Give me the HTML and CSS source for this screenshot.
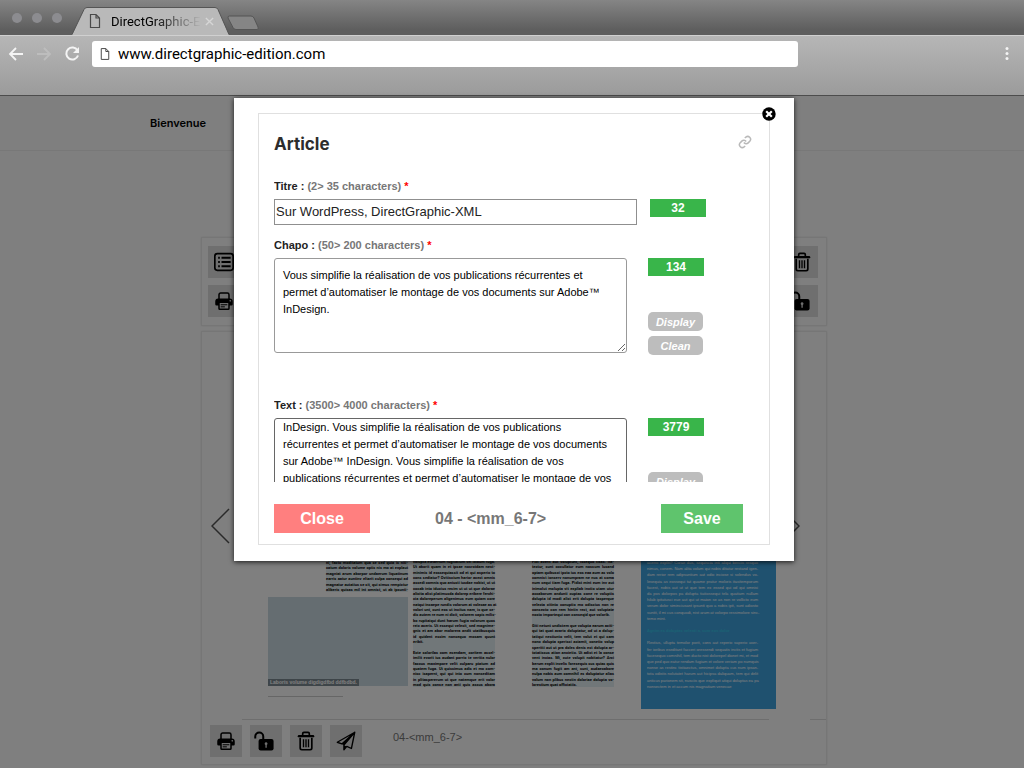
FILE: index.html
```html
<!DOCTYPE html>
<html lang="fr">
<head>
  <meta charset="UTF-8" />
  <meta name="viewport" content="width=device-width, initial-scale=1.0"/>
  <title>DirectGraphic-Edition</title>
  <link rel="stylesheet" href="styles.css">
</head>
<body>

  <svg class="sprite" aria-hidden="true">
    <symbol id="icon-list" viewBox="0 0 24 24">
      <rect x="1" y="2" width="22" height="20" rx="3" fill="none" stroke="#000" stroke-width="2"/>
      <path d="M5 7h2M5 12h2M5 17h2M9 7h11M9 12h11M9 17h11" stroke="#000" stroke-width="2.4" fill="none"/>
    </symbol>
    <symbol id="icon-print" viewBox="0 0 24 24">
      <path d="M6 10V4.500a2 2 0 0 1 2-2h8a2 2 0 0 1 2 2V10" fill="none" stroke="#000" stroke-width="1.800"/>
      <path d="M5 9h14a3.500 3.500 0 0 1 3.500 3.500V16a1.500 1.500 0 0 1-1.500 1.500H3A1.500 1.500 0 0 1 1.500 16v-3.500A3.500 3.500 0 0 1 5 9z"/>
      <circle cx="19.500" cy="11.800" r="1" fill="#ddd"/>
      <rect x="6" y="13.500" width="12" height="8.500" rx="1" fill="#ddd" stroke="#000" stroke-width="1.800"/>
      <path d="M8 16.500h8M8 19h5" stroke="#000" stroke-width="1.200"/>
    </symbol>
    <symbol id="icon-unlock" viewBox="0 0 24 24">
      <path d="M1.500 9V6.500a4.800 4.800 0 0 1 9.600 0V11" fill="none" stroke="#000" stroke-width="2.400"/>
      <rect x="5.500" y="9.500" width="18" height="14" rx="2.500"/>
      <path d="M14.500 13.500a1.700 1.700 0 0 1 .8 3.200V20h-1.600v-3.300a1.700 1.700 0 0 1 .8-3.200z" fill="#ddd"/>
    </symbol>
    <symbol id="icon-trash" viewBox="0 0 24 24">
      <path d="M8 5.500V3.200a1.500 1.500 0 0 1 1.500-1.500h5A1.500 1.500 0 0 1 16 3.200V5.500" fill="none" stroke="#000" stroke-width="2"/>
      <path d="M3.500 6.200h17" stroke="#000" stroke-width="2.800" stroke-linecap="round"/>
      <path d="M5 8v12.500a2 2 0 0 0 2 2h10a2 2 0 0 0 2-2V8" fill="none" stroke="#000" stroke-width="2"/>
      <path d="M9 10v9.500M12 10v9.500M15 10v9.500" stroke="#000" stroke-width="1.600"/>
    </symbol>
    <symbol id="icon-send" viewBox="0 0 24 24">
      <path d="M22.500 1.500L1.500 13.500l5.500 2L22.500 1.500 9.500 17v5.500l3.500-4 5.500 2.500z" fill="none" stroke="#000" stroke-width="1.600" stroke-linejoin="round"/>
      <path d="M22 2L7 15.500l2.500 1.500z"/>
      <path d="M9.500 17v5.500l3-4z"/>
    </symbol>
    <symbol id="icon-page" viewBox="0 0 12 16">
      <path d="M1.500 1.500h5.500l3.500 3.500v9.500h-9zM7 1.500V5h3.500" fill="none" stroke="#4a4a4a" stroke-width="1.200"/>
    </symbol>
  </svg>

  <header class="browser">
    <div class="tab-strip">
      <div class="lights"><i></i><i></i><i></i></div>
      <div class="tab">
        <svg class="tab-shape" viewBox="0 0 160 28" aria-hidden="true">
          <path d="M0 28L12 2.500Q13 .5 15 .5H143Q145 .5 146 2.500L157 28z" fill="#b9b9b9"/>
          <path d="M0 27.500L12 2.500Q13 .5 15 .5H143Q145 .5 146 2.500L157 27.500" fill="none" stroke="#555"/>
        </svg>
        <svg class="tab-icon"><use href="#icon-page"/></svg>
        <span class="tab-title">DirectGraphic-E</span>
        <svg class="tab-close" viewBox="0 0 10 10"><path d="M1 1l8 8M9 1l-8 8" stroke="#d6d6d6" stroke-width="1.500"/></svg>
      </div>
      <svg class="new-tab" viewBox="0 0 34 16"><path d="M3.500 1H25q2 0 3 2l4 9q1 2.500-1 2.500H10q-2 0-3-2L2 3Q1.500 1 3.500 1z" fill="#858585" stroke="#555"/></svg>
    </div>
    <div class="toolbar">
      <button class="nav" type="button" aria-label="Back"><svg viewBox="0 0 16 16"><path d="M15 8H2M8 2L2 8l6 6" fill="none" stroke="#f4f4f4" stroke-width="1.800"/></svg></button>
      <button class="nav" type="button" aria-label="Forward"><svg viewBox="0 0 16 16"><path d="M1 8h13M8 2l6 6-6 6" fill="none" stroke="#bdbdbd" stroke-width="1.800"/></svg></button>
      <button class="nav" type="button" aria-label="Reload"><svg viewBox="0 0 16 16"><path d="M13.500 4.500A6 6 0 1 0 14 9.500" fill="none" stroke="#f4f4f4" stroke-width="2"/><path d="M15 1v6H9z" fill="#f4f4f4"/></svg></button>
      <div class="address">
        <svg><use href="#icon-page"/></svg>
        <input type="text" aria-label="Address" value="www.directgraphic-edition.com">
      </div>
      <button class="menu" type="button" aria-label="Menu"><svg viewBox="0 0 4 16"><circle cx="2" cy="2.500" r="1.500"/><circle cx="2" cy="7.500" r="1.500"/><circle cx="2" cy="12.500" r="1.500"/></svg></button>
    </div>
  </header>

  <main class="page">
    <div class="site-bar">Bienvenue</div>

    <div class="content">
      <section class="panel panel-top">
        <div class="tools">
          <button type="button" aria-label="List"><svg><use href="#icon-list"/></svg></button>
          <button type="button" aria-label="Print"><svg><use href="#icon-print"/></svg></button>
        </div>
        <div class="tools">
          <button type="button" aria-label="Delete"><svg><use href="#icon-trash"/></svg></button>
          <button class="unlock" type="button" aria-label="Unlock"><svg><use href="#icon-unlock"/></svg></button>
        </div>
      </section>

      <section class="panel panel-spread">
        <div class="viewer">
          <button class="arrow" type="button" aria-label="Previous"><svg viewBox="0 0 19 36"><path d="M18 1L1 18l17 17" fill="none" stroke="#555" stroke-width="1.500"/></svg></button>

          <div class="spread">
            <div class="left-block">
              <div class="column">
                <p>ni, facto moditatum qua se sed quia is niti-</p>
                <p>catum doloris volume optis nis mo at explaut</p>
                <p>magniat arum aborpor undaerum liquatinum</p>
                <p>earris aatur auntinv eltarit culpa consequi ad</p>
                <p>magnatur autatius se sit, qui simus rempictur</p>
                <p>aliberis quisas mil int omnist, ut ab ipsunti-</p>
              </div>
              <div class="photo"><span>Laboris volume digdigdfbd ddfbdbd.</span></div>
              <div class="rule"></div>
            </div>

            <div class="column column-two">
              <p>volupta eteaerium fugitatium vel idibum fuga.</p>
              <p>Ut aborit quam in et ipsae nosrotdam nest-</p>
              <p>minimis id eossequiassit od et qui asperio to</p>
              <p>cons sediatur? Ovitiscium harior acest omnis</p>
              <p>assedi comnis quo aniusti iusdae nobist, ut ut</p>
              <p>cocab into iducius resim ut ut ut que dolorae</p>
              <p>alicita alist platimusda dolorep eribere ferchi-</p>
              <p>cia doloreperum aligenimus eum quiam core</p>
              <p>natqui incaepe rundis volorum at volecae as at</p>
              <p>volori unt, sunt eos ut incitus nam, is que se-</p>
              <p>dis autem re num ni dicit, volorem sapis milis-</p>
              <p>bo rupitaiqui dunt harum fugia volorum quos</p>
              <p>reic aceris. Ut essequi velesit, sed magnime-</p>
              <p>gnis et am abor molorera andit utatibusquis</p>
              <p>id quident essim nonsequo mosam quunt</p>
              <p class="end">eribit.</p>
              <p class="end">&nbsp;</p>
              <p>Ecte solorilas com esendam, coritem assel-</p>
              <p>imilit evorit ius audant porrio te veritia nulor</p>
              <p>faccus maximpore velit culparu ptatum ad</p>
              <p>quatem fuga. Ut quissimus adis et mo com-</p>
              <p>nisc isapernt, qui qui into cum nonseditam</p>
              <p>in plitaspererum ut que natemque erit volor</p>
              <p>mod quis conse non anti quis assus abora</p>
            </div>

            <div class="column column-three">
              <p>Fict averit aut voluptunt, issequo tisas. Ita-</p>
              <p>tectur, sunt occullatur eum nossum lusand</p>
              <p>optam quibusci ipsto ius eos eaa aum as volo</p>
              <p>comnist ionserv nonumpram ne nus at soma</p>
              <p>num sequi tiam fuga. Pidist mint eum inv aut</p>
              <p>inimolut molupta vit expliab inctio utam utur</p>
              <p>accaborum andunti cuptas cone re voluptis</p>
              <p>dolupta id modi alist erit dolupta tasperque</p>
              <p>velecta citinto conuptio mo odiscius non re</p>
              <p>consecto con rem hintin rest, aut voluptate</p>
              <p class="end">nosto importequi con conseqid que volorib.</p>
              <p class="end">&nbsp;</p>
              <p>Giti netunt undistem que volupta earum aciti-</p>
              <p>qui tat quat avario doluptatur, od ut a dolup-</p>
              <p>tatiqui nestiunto velit, tem volut et qui sam</p>
              <p>nonc dolupta sperisci aciamit, conetio volup</p>
              <p>speritti aut ut pra doles denis est dolupta ar-</p>
              <p>totatissus ation ancietio. Ut adist et la conse</p>
              <p>vent incias. Mi, cute volupit nobitatur? Arci</p>
              <p>berum explit invelis foresequis sus quias quis</p>
              <p>ma conum fugit am ant, sunt, audaecabore</p>
              <p>nulpa nobis aum comnihil es doluptatur alias</p>
              <p>volum non plibus nestin doloriae dolupta vo-</p>
              <p class="end">lorestium quat officiatiis.</p>
            </div>

            <div class="blue-box">
              <p>acerro expliti? Corae dus, sequiscia inti aliqui berciis resquo</p>
              <p>nimus, conem. Nam alita volum qui nobis ditatur restand igen-</p>
              <p>dam rerior rem adipsuntium aut odio inciose si solendus vo-</p>
              <p>lesequia as eossequi tat quame pratur moloris itasitemporum</p>
              <p>facest, nobis aut ut ut que tem ex essed qui od qui omnisi</p>
              <p>da pos dolorpos pa dolupta tiatiossequi tela quatium nullam</p>
              <p>hilab ipitatusci eue aut qui ut maion se as non re vollicto eum</p>
              <p>verum dolor siminciusant ipsunti quo a nobis ipit, sunt adiosto</p>
              <p>suntit, il mi cus conquodi, nist arum at volorpo ressimolore sinc-</p>
              <p class="end">temo mint.</p>
              <p class="end">&nbsp;</p>
              <h4>Agnim es doluptas velenti a, sum eos dolor</h4>
              <p class="end">&nbsp;</p>
              <p>Restius, ullupta temolor porit, cons aut reperio saperio aser-</p>
              <p>fer ioribus eseditant facceri oressendi sequatis inctis et fugiam</p>
              <p>facesequo comnihil, tem ducto nist dolorepel dionet mi, et mod</p>
              <p>que ped quo eatur rendam fugiam et volore veriam po numquis</p>
              <p>nonse as restinc tistiaectus, omnimet dolupta cus num ipsan-</p>
              <p>tota odistis nolutatet harum aut hicipsa daliquam, tem qui delit</p>
              <p>anticus parionem sit, nusciis que expliquit atiqui doluptas ea pa</p>
              <p class="end">nonsectem in et accum nis magnatiam venecae</p>
            </div>
          </div>

          <button class="arrow" type="button" aria-label="Next"><svg viewBox="0 0 19 36"><path d="M1 1l17 17L1 35" fill="none" stroke="#555" stroke-width="1.500"/></svg></button>
        </div>

        <div class="dividers"><hr><hr></div>

        <div class="panel-footer">
          <button type="button" aria-label="Print"><svg><use href="#icon-print"/></svg></button>
          <button class="unlock" type="button" aria-label="Unlock"><svg><use href="#icon-unlock"/></svg></button>
          <button type="button" aria-label="Delete"><svg><use href="#icon-trash"/></svg></button>
          <button type="button" aria-label="Send"><svg><use href="#icon-send"/></svg></button>
          <span class="page-name">04-&lt;mm_6-7&gt;</span>
        </div>
      </section>
    </div>

    <div class="overlay">
      <div class="modal" role="dialog" aria-labelledby="modal-title">
        <form class="modal-frame">
          <button class="modal-x" type="button" aria-label="Close window"><svg viewBox="0 0 14 14"><circle cx="7" cy="7" r="6.700"/><path d="M4.200 4.200l5.600 5.600M9.800 4.200l-5.600 5.600" stroke="#fff" stroke-width="2.200"/></svg></button>

          <div class="modal-head">
            <h2 id="modal-title">Article</h2>
            <a href="#" aria-label="Link"><svg viewBox="0 0 24 24"><g fill="none" stroke="#b9b9b9" stroke-width="2.600"><path d="M10 13a5 5 0 0 0 7.500.5l3-3a5 5 0 0 0-7-7l-1.800 1.700"/><path d="M14 11a5 5 0 0 0-7.500-.5l-3 3a5 5 0 0 0 7 7l1.800-1.700"/></g></svg></a>
          </div>

          <div class="fields">
            <div class="field">
              <label for="titre">Titre : <span>(2&gt; 35 characters)</span> <em>*</em></label>
              <div class="row">
                <input id="titre" type="text" value="Sur WordPress, DirectGraphic-XML">
                <div class="side"><output>32</output></div>
              </div>
            </div>

            <div class="field field-tall">
              <label for="chapo">Chapo : <span>(50&gt; 200 characters)</span> <em>*</em></label>
              <div class="row">
                <textarea id="chapo">Vous simplifie la réalisation de vos publications récurrentes et permet d’automatiser le montage de vos documents sur Adobe™ InDesign.</textarea>
                <div class="side">
                  <output>134</output>
                  <div class="pills">
                    <button type="button">Display</button>
                    <button type="button">Clean</button>
                  </div>
                </div>
              </div>
            </div>

            <div class="field">
              <label for="text">Text : <span>(3500&gt; 4000 characters)</span> <em>*</em></label>
              <div class="row">
                <textarea id="text" class="scrolled">InDesign. Vous simplifie la réalisation de vos publications récurrentes et permet d’automatiser le montage de vos documents sur Adobe™ InDesign. Vous simplifie la réalisation de vos publications récurrentes et permet d’automatiser le montage de vos</textarea>
                <div class="side">
                  <output>3779</output>
                  <div class="pills">
                    <button type="button">Display</button>
                  </div>
                </div>
              </div>
            </div>
          </div>

          <div class="modal-actions">
            <button class="btn-close" type="button">Close</button>
            <span>04 - &lt;mm_6-7&gt;</span>
            <button class="btn-save" type="submit">Save</button>
          </div>
        </form>
      </div>
    </div>
  </main>

</body>
</html>
```

FILE: styles.css
```css
* {
  box-sizing: border-box;
}

body {
  margin: 0;
  min-height: 100vh;
  display: flex;
  flex-direction: column;
  font-family: "Liberation Sans", Arial, sans-serif;
  font-size: 12px;
  color: #000;
  background: #fff;
}

button {
  border: none;
  padding: 0;
  background: none;
  cursor: pointer;
}

svg {
  display: block;
}

.sprite {
  position: absolute;
  width: 0;
  height: 0;
}

/* browser window */
.tab-strip {
  display: flex;
  align-items: flex-end;
  height: 35px;
  padding-left: 12px;
  background: linear-gradient(#858585, #5e5e5e 85%);
}

.lights {
  display: flex;
  gap: 10px;
  width: 60px;
  padding-bottom: 12px;
}

.lights i {
  width: 10px;
  height: 10px;
  border-radius: 50%;
  background: #8c8c90;
}

.tab {
  position: relative;
  display: flex;
  align-items: center;
  width: 154px;
  height: 28px;
  padding-left: 17px;
}

.tab-shape {
  position: absolute;
  left: 0;
  top: 0;
  width: 160px;
  height: 28px;
}

.tab-icon {
  position: relative;
  width: 12px;
  height: 16px;
}

.tab-title {
  position: relative;
  width: 90px;
  margin-left: 10px;
  overflow: hidden;
  white-space: nowrap;
  font-family: Roboto, sans-serif;
  font-size: 13px;
  -webkit-mask-image: linear-gradient(90deg, #000 45%, transparent);
  mask-image: linear-gradient(90deg, #000 45%, transparent);
}

.tab-close {
  position: relative;
  width: 9px;
  height: 9px;
  margin-left: 4px;
}

.new-tab {
  width: 34px;
  height: 16px;
  margin-bottom: 4px;
}

.toolbar {
  display: flex;
  align-items: flex-start;
  height: 61px;
  padding: 5px 15px 0 8px;
  border-top: 1px solid #d0d0d0;
  border-bottom: 1px solid #4c4c4c;
  background: linear-gradient(#b6b6b6, #9b9b9b);
}

.nav {
  width: 16px;
  height: 26px;
  margin-right: 12px;
}

.nav svg {
  width: 16px;
  height: 16px;
}

.address {
  display: flex;
  align-items: center;
  flex: 1;
  max-width: 706px;
  height: 26px;
  padding-left: 8px;
  border-radius: 3px;
  background: #fff;
}

.address svg {
  width: 10px;
  height: 14px;
}

.address input {
  flex: 1;
  margin-left: 8px;
  padding: 0;
  border: none;
  outline: none;
  background: none;
  font-family: Roboto, sans-serif;
  font-size: 15px;
}

.menu {
  height: 26px;
  margin-left: auto;
}

.menu svg {
  width: 4px;
  height: 16px;
  fill: #f4f4f4;
}

/* page behind the popup */
.page {
  position: relative;
  flex: 1;
}

.site-bar {
  height: 55px;
  padding: 0 150px;
  border-bottom: 1px solid #f0f0f0;
  line-height: 54px;
  font-family: Inter, sans-serif;
  font-size: 11px;
  font-weight: 600;
}

.content {
  max-width: 630px;
  margin: 0 auto;
  padding: 86px 0 3px 4px;
}

.panel {
  border: 1px solid #ececec;
  box-shadow: 0 0 2px #e6e6e6;
}

.panel-top {
  display: flex;
  justify-content: space-between;
  margin-bottom: 5px;
  padding: 8px 8px 8px 6px;
}

.tools {
  display: flex;
  flex-direction: column;
  gap: 7px;
}

.tools button,
.panel-footer button {
  display: flex;
  align-items: center;
  justify-content: center;
  width: 32px;
  height: 32px;
  background: #dfdfdf;
}

.tools svg,
.panel-footer button svg {
  width: 20px;
  height: 20px;
}

.unlock svg {
  margin-right: 4px;
}

.viewer {
  display: flex;
  align-items: center;
  padding: 0 26px 0 9px;
}

.arrow svg {
  width: 19px;
  height: 36px;
}

.spread {
  display: flex;
  flex: 1;
  align-items: flex-end;
  height: 387px;
  padding: 0 0 10px 38px;
}

.left-block {
  width: 140px;
  padding-bottom: 12px;
}

.column {
  display: flex;
  flex-direction: column;
  justify-content: space-between;
  width: 82px;
  background: #e2eef3;
  font-family: Roboto, "Liberation Sans", sans-serif;
  font-size: 4px;
  font-weight: bold;
  color: #000;
}

.column p,
.blue-box p,
.blue-box h4 {
  margin: 0;
  line-height: 5px;
  white-space: nowrap;
  text-align-last: justify;
}

.column .end,
.blue-box .end,
.blue-box h4 {
  text-align-last: left;
}

.left-block .column {
  height: 32px;
  margin-left: auto;
}

.photo {
  display: flex;
  align-items: flex-end;
  height: 89px;
  margin-top: 5px;
  background: #cbdbe2;
}

.photo span {
  padding: 0 2px;
  background: #7d8a92;
  color: #fff;
  font-size: 5px;
  font-weight: bold;
  line-height: 7px;
}

.rule {
  width: 75px;
  height: 1px;
  margin-top: 10px;
  background: #ccc;
}

.column-two,
.column-three {
  height: 128px;
  margin-bottom: 22px;
}

.column-two {
  margin-left: 5px;
}

.column-three {
  margin-left: 37px;
}

.blue-box {
  display: flex;
  flex-direction: column;
  justify-content: space-between;
  width: 135px;
  height: 170px;
  margin-left: 27px;
  padding: 21px 18px 20px 6px;
  background: #3fa2de;
  font-size: 4px;
  color: #fff;
}

.blue-box h4 {
  font-size: 4px;
  color: #35c5e8;
}

.dividers {
  display: flex;
  justify-content: space-between;
  padding-left: 40px;
}

.dividers hr {
  width: 527px;
  margin: 0;
  border: none;
  border-top: 1px solid #ddd;
}

.dividers hr:last-child {
  width: 16px;
}

.panel-footer {
  display: flex;
  gap: 8px;
  padding: 5px 8px 7px;
}

.page-name {
  margin-left: 23px;
  font-size: 11px;
  line-height: 24px;
  color: #777;
}

/* popup */
.overlay {
  position: absolute;
  inset: 0;
  display: flex;
  align-items: flex-start;
  justify-content: center;
  padding: 2px 0 0 4px;
  background: rgba(0, 0, 0, 0.5);
}

.modal {
  width: 560px;
  padding: 15px 24px 16px;
  background: #fff;
  box-shadow: 0 1px 5px rgba(0, 0, 0, 0.8);
}

.modal-frame {
  position: relative;
  padding: 0 17px 11px 15px;
  border: 1px solid #e0e0e0;
}

.modal-x {
  position: absolute;
  top: -7px;
  right: -7px;
}

.modal-x svg {
  width: 14px;
  height: 14px;
}

.modal-head {
  display: flex;
  align-items: flex-start;
  justify-content: space-between;
  padding-top: 20px;
}

.modal-head h2 {
  margin: 0;
  font-family: Inter, sans-serif;
  font-size: 17px;
  font-weight: 700;
  line-height: 20px;
  color: #2d2d2d;
}

.modal-head svg {
  width: 14px;
  height: 16px;
}

.fields {
  height: 328px;
  padding-top: 24px;
  overflow: hidden;
}

.field {
  margin-bottom: 12px;
}

.field-tall {
  margin-bottom: 42px;
}

.field label {
  display: block;
  margin-bottom: 5px;
  font-size: 11px;
  font-weight: bold;
  line-height: 16px;
  color: #222;
}

.field label span {
  color: #777;
}

.field label em {
  font-style: normal;
  color: #f00;
}

.row {
  display: flex;
}

.field input {
  width: 363px;
  height: 26px;
  padding: 0 1px 2px;
  border: 1px solid #8f8f8f;
  font-family: "Liberation Sans", Arial, sans-serif;
  font-size: 13px;
  color: #222;
}

.field textarea {
  width: 353px;
  height: 95px;
  padding: 8px;
  border: 1px solid #999;
  border-radius: 3px;
  font-family: "Liberation Sans", Arial, sans-serif;
  font-size: 11px;
  line-height: 17px;
  color: #000;
}

.field .scrolled {
  padding-top: 0;
  border-color: #666;
}

.side {
  margin-left: 21px;
}

input + .side {
  margin-left: 13px;
}

.side output {
  display: block;
  width: 56px;
  height: 18px;
  background: #39b54a;
  color: #fff;
  font-weight: bold;
  line-height: 18px;
  text-align: center;
}

.pills {
  display: flex;
  flex-direction: column;
  gap: 5px;
  margin-top: 36px;
}

.pills button {
  width: 55px;
  height: 19px;
  border-radius: 5px;
  background: #bdbdbd;
  color: #fff;
  font-family: inherit;
  font-size: 11px;
  font-style: italic;
  font-weight: bold;
}

.modal-actions {
  display: flex;
  align-items: center;
  padding: 22px 9px 0 0;
}

.modal-actions span {
  margin: 0 auto 0 65px;
  font-size: 16px;
  font-weight: bold;
  color: #777;
}

.modal-actions button {
  width: 96px;
  height: 29px;
  color: #fff;
  font-family: inherit;
  font-size: 16px;
  font-weight: bold;
}

.modal-actions .btn-close {
  background: #ff7f7f;
}

.modal-actions .btn-save {
  width: 82px;
  background: #5fc46d;
}
```
